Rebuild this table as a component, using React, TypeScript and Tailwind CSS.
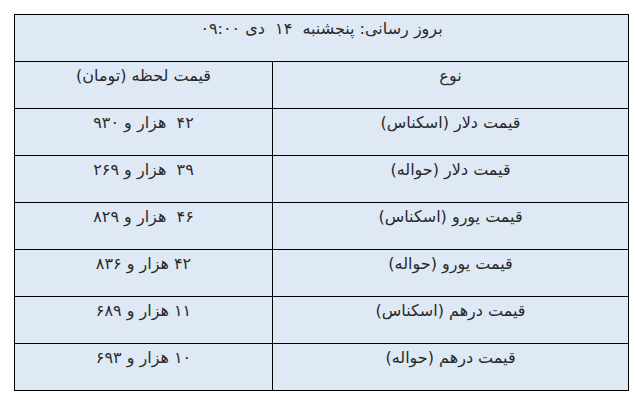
const rows: [string, string][] = [
  ["قیمت دلار (اسکناس)", "۴۲  هزار و ۹۳۰"],
  ["قیمت دلار (حواله)", "۳۹  هزار و ۲۶۹"],
  ["قیمت یورو (اسکناس)", "۴۶  هزار و ۸۲۹"],
  ["قیمت یورو (حواله)", "۴۲ هزار و ۸۳۶"],
  ["قیمت درهم (اسکناس)", "۱۱ هزار و ۶۸۹"],
  ["قیمت درهم (حواله)", "۱۰ هزار و ۶۹۳"],
];

const cell = "h-[47px] border border-black align-top pt-[3px] text-center whitespace-pre";

export default function App() {
  return (
    <div className="w-[635px] h-[404px] bg-white pt-[14px] pl-[14px]">
      <table
        dir="rtl"
        className="w-[615px] border-collapse bg-[#dee9f5] text-[16px] leading-[22px] text-[#2a2a2a]"
        style={{ fontFamily: '"DejaVu Sans", "Noto Sans", sans-serif' }}
      >
        <tbody>
          <tr>
            <td colSpan={2} className={cell}>
              {"بروز رسانی: پنجشنبه  ۱۴  دی ۰۹:۰۰"}
            </td>
          </tr>
          <tr>
            <td className={`${cell} w-[356px]`}>نوع</td>
            <td className={cell}>قیمت لحظه (تومان)</td>
          </tr>
          {rows.map(([name, price]) => (
            <tr key={name}>
              <td className={cell}>{name}</td>
              <td className={cell}>{price}</td>
            </tr>
          ))}
        </tbody>
      </table>
    </div>
  );
}
